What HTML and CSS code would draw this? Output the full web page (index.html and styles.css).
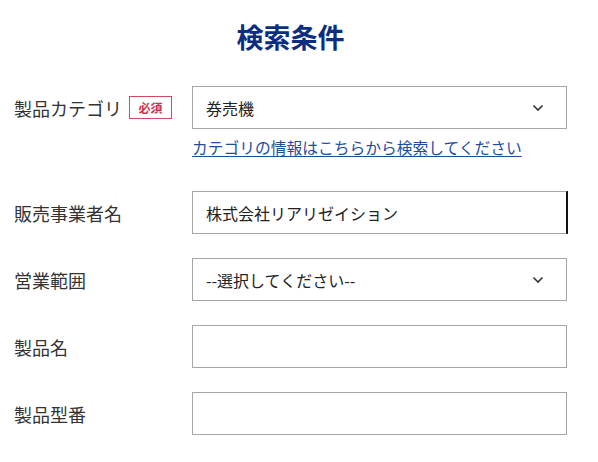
FILE: index.html
```html
<!DOCTYPE html>
<html lang="ja">
<head>
<meta charset="utf-8">
<title>検索条件</title>
<link rel="stylesheet" href="styles.css">
</head>
<body>
<main class="form">
  <h1 class="title">検索条件</h1>

  <div class="row row-first">
    <div class="label">製品カテゴリ<span class="badge">必須</span></div>
    <div class="control">
      <div class="select">
        <span>券売機</span>
        <svg class="chev" width="12" height="8" viewBox="0 0 12 8"><path d="M1.5 1.5 L6 6 L10.5 1.5" fill="none" stroke="#333" stroke-width="1.6"/></svg>
      </div>
      <a class="link" href="#">カテゴリの情報はこちらから検索してください</a>
    </div>
  </div>

  <div class="row">
    <div class="label">販売事業者名</div>
    <div class="control">
      <input class="input input-active" type="text" value="株式会社リアリゼイション">
    </div>
  </div>

  <div class="row">
    <div class="label">営業範囲</div>
    <div class="control">
      <div class="select">
        <span>--選択してください--</span>
        <svg class="chev" width="12" height="8" viewBox="0 0 12 8"><path d="M1.5 1.5 L6 6 L10.5 1.5" fill="none" stroke="#333" stroke-width="1.6"/></svg>
      </div>
    </div>
  </div>

  <div class="row">
    <div class="label">製品名</div>
    <div class="control">
      <input class="input" type="text" value="">
    </div>
  </div>

  <div class="row">
    <div class="label">製品型番</div>
    <div class="control">
      <input class="input" type="text" value="">
    </div>
  </div>
</main>
</body>
</html>
```

FILE: styles.css
```css
* { box-sizing: border-box; }

html, body {
  margin: 0;
  padding: 0;
  background: #fff;
}

body {
  font-family: "Noto Sans CJK JP", "Noto Sans", sans-serif;
  color: #333;
}

.form {
  width: 567px;
  padding: 17px 0 0 14px;
}

.title {
  margin: 0 0 29px;
  font-size: 27px;
  line-height: 40px;
  font-weight: 700;
  color: #0b2e82;
  text-align: center;
}

.row {
  display: grid;
  grid-template-columns: 178px 375px;
  margin-bottom: 24px;
}

.row-first {
  margin-bottom: 31px;
}

.label {
  display: flex;
  align-items: center;
  height: 43px;
  font-size: 18px;
  color: #333;
}

.badge {
  margin-left: 7px;
  width: 43px;
  height: 23px;
  border: 1px solid #d24a5e;
  color: #c9344d;
  font-size: 12px;
  font-weight: 700;
  display: flex;
  align-items: center;
  justify-content: center;
  line-height: 1;
}

.control {
  display: flex;
  flex-direction: column;
}

.select {
  height: 43px;
  border: 1px solid #a6a6a6;
  display: flex;
  align-items: center;
  justify-content: space-between;
  padding: 0 22px 0 13px;
  font-size: 16px;
  color: #222;
  background: #fff;
}

.chev {
  display: block;
}

.link {
  margin-top: 7px;
  font-size: 15.75px;
  line-height: 24px;
  color: #1d4e9e;
  text-decoration: underline;
  text-underline-offset: 2px;
}

.input {
  height: 43px;
  width: 375px;
  border: 1px solid #a6a6a6;
  padding: 0 13px;
  margin: 0;
  font-family: "Noto Sans CJK JP", "Noto Sans", sans-serif;
  font-size: 16px;
  color: #222;
  background: #fff;
  outline: none;
}

.input-active {
  border-right-color: #111;
  box-shadow: 1px 0 0 #111;
}
```
